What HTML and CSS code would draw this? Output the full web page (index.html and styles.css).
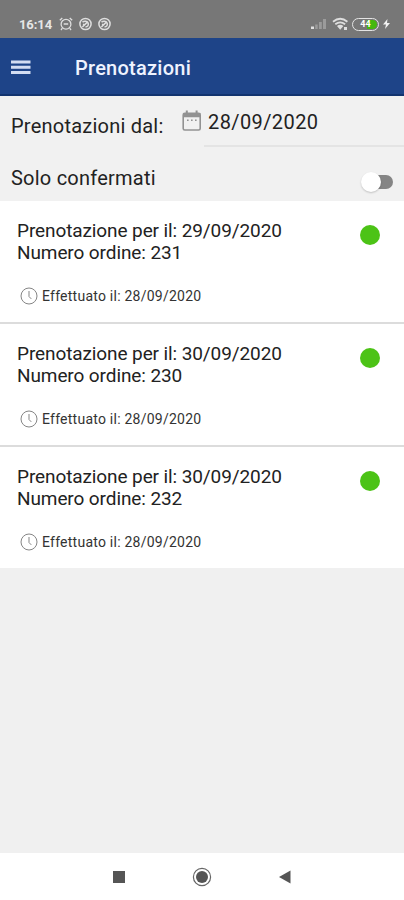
FILE: index.html
```html
<!DOCTYPE html>
<html lang="it">
<head>
<meta charset="utf-8">
<title>Prenotazioni</title>
<link rel="stylesheet" href="styles.css">
</head>
<body>
<div class="status">
  <span class="time">16:14</span>
  <svg class="alarm" width="14" height="14" viewBox="0 0 14 14" fill="none" stroke="#dedede" stroke-width="1.3"><circle cx="7" cy="7.2" r="4.9"/><path d="M.8 3.2 3.3 1M13.2 3.2 10.7 1M3.3 11.2 2 13M10.7 11.2 12 13M4.7 7H9.2"/></svg>
  <svg class="app" width="13" height="14" viewBox="0 0 13 14" fill="none" stroke="#dedede" stroke-width="1.5"><circle cx="6.5" cy="7" r="5.6"/><path d="M3.5 5.2C5 3.6 8.5 3.8 9.2 6.2S8 10 6.5 9.7M3.4 10 7.8 5.6M4 7.3 6 8.2"/></svg>
  <svg class="app" width="13" height="14" viewBox="0 0 13 14" fill="none" stroke="#dedede" stroke-width="1.5"><circle cx="6.5" cy="7" r="5.6"/><path d="M3.5 5.2C5 3.6 8.5 3.8 9.2 6.2S8 10 6.5 9.7M3.4 10 7.8 5.6M4 7.3 6 8.2"/></svg>
  <svg class="signal" width="16" height="12" viewBox="0 0 16 12"><path fill="#e0e0e0" d="M0 8.5h3V11H0z"/><path fill="#9b9b9b" d="M4.2 6.5h2.5V11H4.2zM8 4h2.8v7H8zM12 1h3v10h-3z"/></svg>
  <svg class="wifi" width="17" height="14" viewBox="0 0 17 14" fill="none" stroke="#dedede" stroke-width="1.8"><path d="M1 4.7Q8.2-1.2 15.4 4.7M3.3 7.3Q8.2 3.4 13.1 7.3"/><path fill="#dedede" stroke="none" d="M5 9Q8.2 6.6 11.4 9L8.2 12.8zM12 10h3v3h-3z"/></svg>
  <span class="battery"><span class="charge">44</span></span>
  <svg class="bolt" width="7" height="10" viewBox="0 0 7 10"><path fill="#f2f2f2" d="M4.5 0 0 5.5h3L2 10l5-6H4z"/></svg>
</div>
<header class="bar">
  <svg class="menu" width="20" height="15" viewBox="0 0 20 15"><path fill="#d3ddf2" d="M0 .4h19.5v3H0zM0 5.7h19.5v3H0zM0 11h19.5v3H0z"/></svg>
  <h1 class="title">Prenotazioni</h1>
</header>
<main class="content">
  <section class="filters">
    <div class="row from">
      <span class="label wide">Prenotazioni dal:</span>
      <svg class="calendar" width="20" height="22" viewBox="0 0 20 22"><rect x="1.2" y="3.4" width="17" height="16.6" rx="1.6" fill="none" stroke="#929292" stroke-width="1.6"/><path fill="#929292" d="M1 3h17.4v4.2H1zM3.8.6h2v3h-2zM13.6.6h2v3h-2zM5 9.5h1.6v1.6H5zM9 9.5h1.6v1.6H9zM13 9.5h1.6v1.6H13z"/></svg>
      <span class="date">28/09/2020</span>
    </div>
    <div class="row confirmed">
      <span class="label">Solo confermati</span>
      <span class="switch"><span class="knob"></span></span>
    </div>
  </section>
  <article class="card">
    <div class="info"><p class="line booking">Prenotazione per il: 29/09/2020</p><p class="line order">Numero ordine: 231</p>
      <p class="made"><svg class="clock" width="18" height="18" viewBox="0 0 18 18" fill="none" stroke="#858585"><circle cx="9" cy="9" r="8"/><path d="M9 4v5.5l2.3 2.4"/></svg><span>Effettuato il: 28/09/2020</span></p></div>
    <span class="dot"></span>
  </article>
  <article class="card">
    <div class="info"><p class="line booking">Prenotazione per il: 30/09/2020</p><p class="line order">Numero ordine: 230</p>
      <p class="made"><svg class="clock" width="18" height="18" viewBox="0 0 18 18" fill="none" stroke="#858585"><circle cx="9" cy="9" r="8"/><path d="M9 4v5.5l2.3 2.4"/></svg><span>Effettuato il: 28/09/2020</span></p></div>
    <span class="dot"></span>
  </article>
  <article class="card">
    <div class="info"><p class="line booking">Prenotazione per il: 30/09/2020</p><p class="line order">Numero ordine: 232</p>
      <p class="made"><svg class="clock" width="18" height="18" viewBox="0 0 18 18" fill="none" stroke="#858585"><circle cx="9" cy="9" r="8"/><path d="M9 4v5.5l2.3 2.4"/></svg><span>Effettuato il: 28/09/2020</span></p></div>
    <span class="dot"></span>
  </article>
</main>
<nav class="nav">
  <svg width="20" height="20" viewBox="0 0 20 20"><path fill="#555" d="M4 4h12v12H4z"/></svg>
  <svg width="20" height="20" viewBox="0 0 20 20"><circle cx="10" cy="10" r="8.6" fill="none" stroke="#666" stroke-width="1.2"/><circle cx="10" cy="10" r="6" fill="#555"/></svg>
  <svg width="20" height="20" viewBox="0 0 20 20"><path fill="#555" d="M4 10 15.5 3.5v13z"/></svg>
</nav>
</body>
</html>
```
FILE: styles.css
```css
* { box-sizing: border-box; }
body {
  margin: 0;
  height: 900px;
  display: flex;
  flex-direction: column;
  background: #f0f0f0;
  color: #222;
  font-family: Roboto, "Liberation Sans", sans-serif;
  overflow: hidden;
}
h1, p { margin: 0; }
svg { display: block; flex: none; }
.status {
  height: 38px;
  padding: 10px 14px 0 19px;
  display: flex;
  align-items: center;
  background: #777;
  color: #e6e6e6;
}
.time { width: 34px; font-size: 13px; font-weight: 700; letter-spacing: -.1px; }
.alarm { margin-left: 6px; }
.app { margin-left: 6px; }
.signal { margin-left: auto; }
.wifi { margin-left: 5px; }
.battery {
  width: 27px;
  height: 13px;
  margin: 0 4px 0 3px;
  padding: 1px;
  border: 1.5px solid #e4e4e4;
  border-radius: 7px;
}
.charge {
  display: block;
  height: 9px;
  border-radius: 4.5px;
  background: linear-gradient(90deg, #777 55%, #45b80c 55%);
  color: #fff;
  font-size: 9px;
  font-weight: 700;
  line-height: 9px;
  text-align: center;
}
.bar {
  height: 58px;
  padding: 3px 11px 0;
  display: flex;
  align-items: center;
  background: #1e4488;
  border-bottom: 2px solid #12346f;
}
.title { margin-left: 44px; color: #eef3ff; font-size: 20px; font-weight: 500; line-height: 24px; letter-spacing: .25px; }
.content { flex: 1; }
.filters { height: 105px; background: #f1f1f1; }
.row { display: flex; padding-left: 11px; }
.from { height: 56px; padding-top: 14px; }
.label { font-size: 20px; line-height: 24px; letter-spacing: .23px; }
.wide { width: 171px; padding-top: 4px; }
.date {
  flex: 1;
  height: 37px;
  margin-left: 2px;
  padding-left: 4px;
  border-bottom: 2px solid #e4e4e4;
  font-size: 20px;
  line-height: 24px;
  letter-spacing: .4px;
}
.confirmed { height: 49px; padding-top: 14px; padding-right: 11px; justify-content: space-between; }
.switch { width: 28px; height: 14px; margin-top: 9px; border-radius: 7px; background: #858585; position: relative; }
.knob {
  position: absolute;
  left: -4px;
  top: -3px;
  width: 20px;
  height: 20px;
  border-radius: 50%;
  background: #fff;
  box-shadow: 0 1px 2px rgba(0, 0, 0, .2);
}
.card {
  height: 123px;
  padding: 19px 24px 0 17px;
  display: flex;
  justify-content: space-between;
  background: #fff;
  border-bottom: 2px solid #dcdcdc;
}
.card:last-child { height: 121px; border-bottom: 0; }
.line { font-size: 19px; line-height: 22px; letter-spacing: -.1px; white-space: nowrap; }
.made { display: flex; align-items: center; gap: 4px; margin: 23px 0 0 3px; font-size: 14px; line-height: 18px; letter-spacing: .24px; color: #333; white-space: nowrap; }
.dot { width: 20px; height: 20px; margin-top: 5px; border-radius: 50%; background: #4cc316; }
.nav { height: 47px; display: flex; align-items: center; justify-content: center; gap: 63px; background: #fff; }
```
